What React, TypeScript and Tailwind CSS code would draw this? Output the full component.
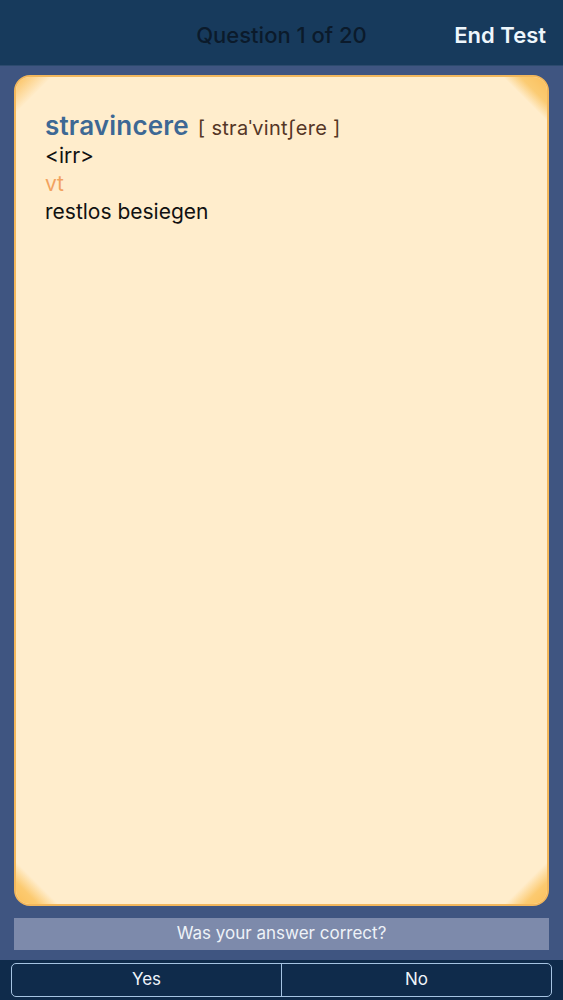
export default function App() {
  return (
    <div
      className="flex h-[1000px] w-full flex-col bg-[#3f5581]"
      style={{ fontFamily: 'Inter, "Noto Sans", sans-serif' }}
    >
      {/* Header */}
      <div className="relative flex h-[66px] shrink-0 items-center justify-center border-b border-[#2c4a6e] bg-[#173a5c] pt-[5px]">
        <span className="text-[22px] font-medium text-[#0b1a2b]">Question 1 of 20</span>
        <span className="absolute right-[17px] text-[22px] font-semibold text-[#eef6fc]">End Test</span>
      </div>

      {/* Card */}
      <div className="flex flex-1 flex-col px-[14px] pt-[9px]">
        <div className="relative flex-1 overflow-hidden rounded-[16px] border-2 border-[#f2b75c] bg-[#ffedcc]">
          <div className="absolute left-0 top-0 h-[40px] w-[40px] bg-[linear-gradient(135deg,#fbbf5a_0%,#ffedcc_45%,transparent_60%)]" />
          <div className="absolute right-0 top-0 h-[44px] w-[44px] bg-[linear-gradient(225deg,#fbbf5a_0%,#fbcb73_30%,#ffedcc_50%,transparent_60%)]" />
          <div className="absolute bottom-0 left-0 h-[44px] w-[44px] bg-[linear-gradient(45deg,#fbbf5a_0%,#fcca70_25%,#ffedcc_48%,transparent_60%)]" />
          <div className="absolute bottom-0 right-0 h-[44px] w-[44px] bg-[linear-gradient(315deg,#fbbf5a_0%,#fcca70_25%,#ffedcc_48%,transparent_60%)]" />
          <div className="relative px-[29px] pt-[35px] text-[21px] leading-[28px] text-[#111]">
            <div className="flex items-baseline gap-[9px]">
              <span className="text-[26px] font-semibold tracking-[0.2px] text-[#3d6894]">stravincere</span>
              <span className="text-[20px] tracking-[0.3px] text-[#553626]">[ straˈvintʃere ]</span>
            </div>
            <div>&lt;irr&gt;</div>
            <div className="text-[#f2a25f]">vt</div>
            <div>restlos besiegen</div>
          </div>
        </div>
      </div>

      {/* Prompt */}
      <div className="mx-[14px] mt-[12px] flex h-[32px] items-center justify-center bg-[#7d8aab] text-[17px] text-[#eef2f8]">
        Was your answer correct?
      </div>

      {/* Buttons */}
      <div className="mt-[10px] flex h-[40px] shrink-0 items-center bg-[#0f2b4b] px-[11px]">
        <div className="flex h-[34px] w-full overflow-hidden rounded-[5px] border border-[#a6c4e2] text-[17px] text-[#eef4fa]">
          <div className="flex flex-1 items-center justify-center border-r border-[#a6c4e2]">Yes</div>
          <div className="flex flex-1 items-center justify-center">No</div>
        </div>
      </div>
    </div>
  )
}
